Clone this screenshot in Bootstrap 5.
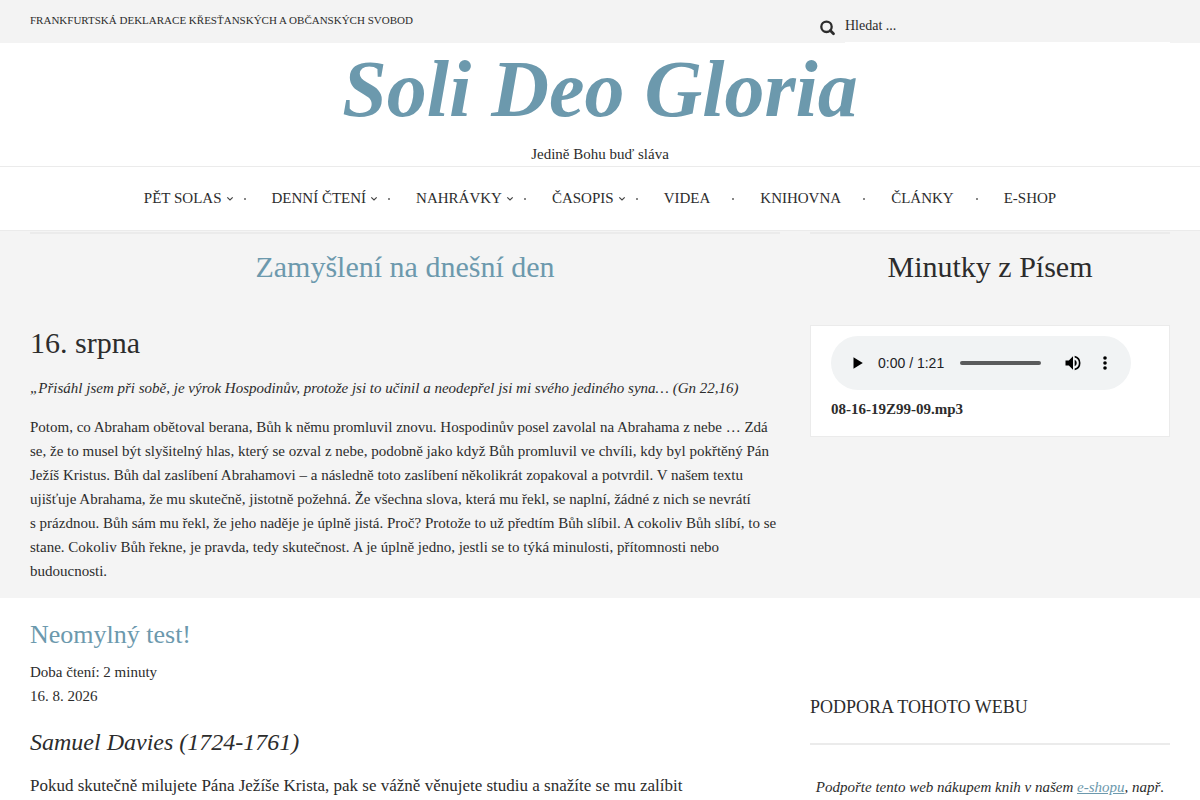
<!DOCTYPE html>
<html lang="cs">
<head>
<meta charset="utf-8">
<meta name="viewport" content="width=device-width, initial-scale=1">
<title>Soli Deo Gloria</title>
<link href="https://cdn.jsdelivr.net/npm/bootstrap@5.3.0/dist/css/bootstrap.min.css" rel="stylesheet">
<style>
:root { --accent: #6c99ad; --ink: #2c2c2c; --line: #ebebeb; --soft: #f3f3f3; }
body { font-family: "Liberation Serif", serif; font-size: 15px; line-height: 24px; color: var(--ink); overflow-x: hidden; }
a { color: var(--accent); }
h1, h2, h3, h4, p { margin: 0; font-weight: 400; }
.page { padding: 0 30px; }
.page > .row { --bs-gutter-x: 30px; }
.soft { background: var(--soft); }

.topnote { font-size: 11px; line-height: 20px; padding-top: 10px; }
.search-form { padding: 10px 0 0 10px; }
.search-form button { border: 0; background: none; padding: 3px 0 0; width: 25px; text-align: left; line-height: 0; color: var(--ink); }
.search-form input { font-size: 14px; line-height: 24px; height: 33px; padding: 0 0 1px; border: 0; border-bottom: 1px solid #fff; border-radius: 0; background: transparent; color: var(--ink); }
.search-form input::placeholder { color: var(--ink); opacity: 1; }

.site-title { font-size: 80px; line-height: 92px; font-weight: 700; font-style: italic; margin-bottom: 7px; }
.site-title a, .plain-link { text-decoration: none; }

.main-menu { border: 1px solid var(--line); border-width: 1px 0; min-height: 65px; padding-bottom: 1px; }
.main-menu .nav-link { padding: 0; color: var(--ink); text-transform: uppercase; }
.after-item { width: 50px; padding: 2px 26px 0 4px; }
.dot { width: 2px; height: 2px; background: #888; }

.bar { border-top: 2px solid var(--line); margin-top: 1px; }
.head-lg { font-size: 30px; line-height: 36px; }
.gap-below { margin-bottom: 15px; }
.section-head { padding: 15px 0 40px; }
.lead-part { background: #f4f4f4; padding-bottom: 15px; }

.sound-box { background: #fff; border: 1px solid var(--line); padding: 10px 20px 15px; }
.file-name { padding-top: 7px; }
.player { max-width: 300px; height: 54px; border-radius: 27px; background: #f1f3f4; font: 14px/20px "Liberation Sans", sans-serif; color: #202124; padding: 0 16px 0 17px; }
.player button { border: 0; background: none; padding: 0; width: 20px; height: 20px; line-height: 0; color: #000; }
.player input { appearance: none; width: 81px; height: 4px; border-radius: 2px; background: #5a5b5c; margin: 0 22px 0 16px; }
.player input::-webkit-slider-thumb { appearance: none; width: 0; height: 0; }
.player-time { margin-left: 10px; }

.post-title { font-size: 26px; line-height: 32px; padding: 21px 0 9px; }
.author { font-size: 24px; line-height: 30px; font-style: italic; padding: 19px 0 15px; }
.post-body { font-size: 17px; line-height: 27px; }
.widget-title { font-size: 18px; line-height: 24px; padding: 97px 0 24px; text-transform: uppercase; border-bottom: 2px solid var(--line); }
.widget-text { padding-top: 30px; }
</style>
</head>
<body>
<div class="soft">
  <div class="container-fluid page">
    <div class="row">
      <div class="col-8"><p class="topnote text-uppercase">Frankfurtská deklarace křesťanských a občanských svobod</p></div>
      <div class="col-4">
        <form class="search-form d-flex align-items-center" role="search">
          <button class="flex-shrink-0" type="button" aria-label="Hledat"><svg width="16" height="16" viewBox="0 0 16 16" fill="none" stroke="currentColor" stroke-width="2.3"><circle cx="6.5" cy="6.8" r="5.2"/><path d="M10.3 10.6L13.5 13.8" stroke-width="2.8" stroke-linecap="round"/></svg></button>
          <input class="flex-fill w-100" type="text" placeholder="Hledat ..." aria-label="Hledat">
        </form>
      </div>
    </div>
  </div>
</div>

<header class="text-center">
  <h1 class="site-title"><a href="#">Soli Deo Gloria</a></h1>
  <p>Jedině Bohu buď sláva</p>
</header>

<nav class="main-menu d-flex align-items-center justify-content-center">
  <ul class="nav justify-content-center">
    <li class="d-flex"><a class="nav-link" href="#">Pět solas</a><span class="after-item d-flex align-items-center justify-content-between"><svg width="8" height="6" viewBox="0 0 8 6" fill="none" stroke="#444" stroke-width="1.2"><path d="M1.3 1.3L4 4L6.7 1.3"/></svg><i class="dot"></i></span></li>
    <li class="d-flex"><a class="nav-link" href="#">Denní čtení</a><span class="after-item d-flex align-items-center justify-content-between"><svg width="8" height="6" viewBox="0 0 8 6" fill="none" stroke="#444" stroke-width="1.2"><path d="M1.3 1.3L4 4L6.7 1.3"/></svg><i class="dot"></i></span></li>
    <li class="d-flex"><a class="nav-link" href="#">Nahrávky</a><span class="after-item d-flex align-items-center justify-content-between"><svg width="8" height="6" viewBox="0 0 8 6" fill="none" stroke="#444" stroke-width="1.2"><path d="M1.3 1.3L4 4L6.7 1.3"/></svg><i class="dot"></i></span></li>
    <li class="d-flex"><a class="nav-link" href="#">Časopis</a><span class="after-item d-flex align-items-center justify-content-between"><svg width="8" height="6" viewBox="0 0 8 6" fill="none" stroke="#444" stroke-width="1.2"><path d="M1.3 1.3L4 4L6.7 1.3"/></svg><i class="dot"></i></span></li>
    <li class="d-flex"><a class="nav-link" href="#">Videa</a><span class="after-item d-flex align-items-center justify-content-end"><i class="dot"></i></span></li>
    <li class="d-flex"><a class="nav-link" href="#">Knihovna</a><span class="after-item d-flex align-items-center justify-content-end"><i class="dot"></i></span></li>
    <li class="d-flex"><a class="nav-link" href="#">Články</a><span class="after-item d-flex align-items-center justify-content-end"><i class="dot"></i></span></li>
    <li><a class="nav-link" href="#">E-shop</a></li>
  </ul>
</nav>

<section class="lead-part">
  <div class="container-fluid page">
    <div class="row">
      <div class="col-8">
        <div class="bar"></div>
        <h2 class="head-lg section-head text-center"><a class="plain-link" href="#">Zamyšlení na dnešní den</a></h2>
        <h2 class="head-lg gap-below">16. srpna</h2>
        <p class="fst-italic gap-below">„Přisáhl jsem při sobě, je výrok Hospodinův, protože jsi to učinil a neodepřel jsi mi svého jediného syna… (Gn 22,16)</p>
        <p>Potom, co Abraham obětoval berana, Bůh k němu promluvil znovu. Hospodinův posel zavolal na Abrahama z nebe … Zdá se, že to musel být slyšitelný hlas, který se ozval z nebe, podobně jako když Bůh promluvil ve chvíli, kdy byl pokřtěný Pán Ježíš Kristus. Bůh dal zaslíbení Abrahamovi – a následně toto zaslíbení několikrát zopakoval a potvrdil. V našem textu ujišťuje Abrahama, že mu skutečně, jistotně požehná. Že všechna slova, která mu řekl, se naplní, žádné z nich se nevrátí s&nbsp;prázdnou. Bůh sám mu řekl, že jeho naděje je úplně jistá. Proč? Protože to už předtím Bůh slíbil. A cokoliv Bůh slíbí, to se stane. Cokoliv Bůh řekne, je pravda, tedy skutečnost. A je úplně jedno, jestli se to týká minulosti, přítomnosti nebo budoucnosti.</p>
      </div>
      <div class="col-4">
        <div class="bar"></div>
        <h2 class="head-lg section-head text-center">Minutky z Písem</h2>
        <div class="sound-box">
          <div class="player d-flex align-items-center">
            <button type="button" aria-label="Přehrát"><svg width="20" height="20" viewBox="0 0 20 20"><path fill="currentColor" d="M5.5 4.3V15.7L14.8 10z"/></svg></button>
            <span class="player-time text-nowrap">0:00 / 1:21</span>
            <input type="range" value="0" aria-label="Pozice přehrávání">
            <button type="button" aria-label="Hlasitost"><svg width="20" height="20" viewBox="0 0 24 24"><path fill="currentColor" d="M3 9v6h4l5 5V4L7 9H3zm13.5 3A4.5 4.5 0 0 0 14 7.97v8.05A4.5 4.5 0 0 0 16.5 12zM14 3.23v2.06a7 7 0 0 1 0 13.42v2.06a9 9 0 0 0 0-17.54z"/></svg></button>
            <button type="button" class="ms-auto" aria-label="Další možnosti"><svg width="20" height="20" viewBox="0 0 20 20" fill="currentColor"><circle cx="10" cy="5" r="1.8"/><circle cx="10" cy="10" r="1.8"/><circle cx="10" cy="15" r="1.8"/></svg></button>
          </div>
          <p class="file-name fw-bold">08-16-19Z99-09.mp3</p>
        </div>
      </div>
    </div>
  </div>
</section>

<main class="container-fluid page">
  <div class="row">
    <article class="col-8">
      <h2 class="post-title"><a class="plain-link" href="#">Neomylný test!</a></h2>
      <p>Doba čtení: 2 minuty</p>
      <p>16. 8. 2026</p>
      <h3 class="author">Samuel Davies (1724-1761)</h3>
      <p class="post-body">Pokud skutečně milujete Pána Ježíše Krista, pak se vážně věnujete studiu a snažíte se mu zalíbit</p>
    </article>
    <aside class="col-4">
      <h4 class="widget-title">Podpora tohoto webu</h4>
      <p class="widget-text fst-italic text-center">Podpořte tento web nákupem knih v našem <a href="#">e-shopu</a>, např.</p>
    </aside>
  </div>
</main>
<script src="https://cdn.jsdelivr.net/npm/bootstrap@5.3.0/dist/js/bootstrap.bundle.min.js"></script>
</body>
</html>
